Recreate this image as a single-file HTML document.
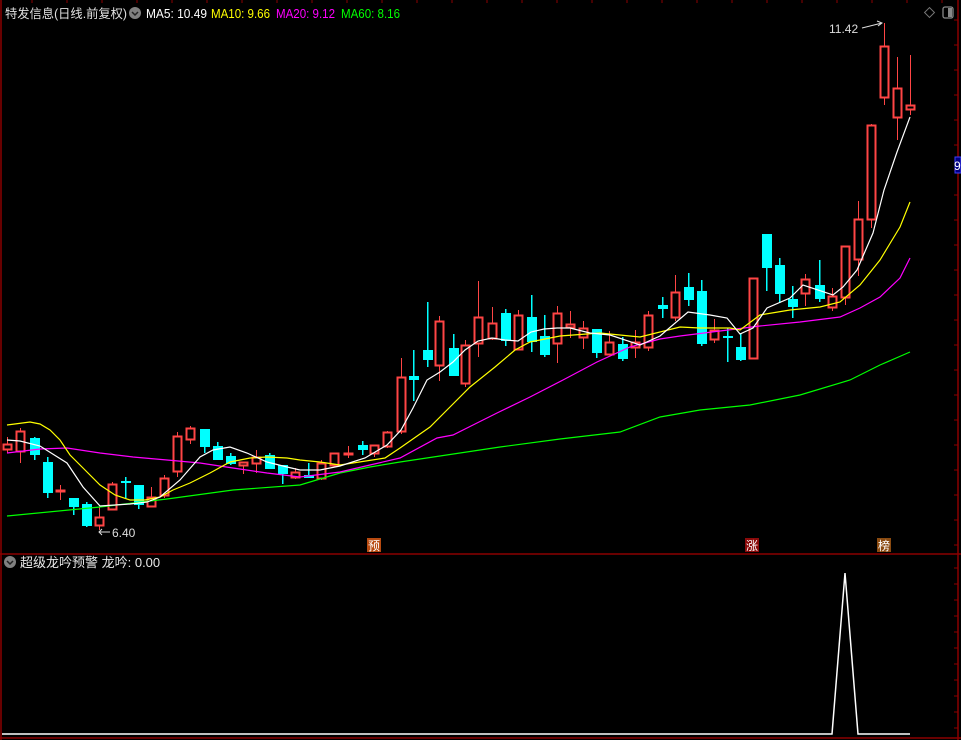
<!DOCTYPE html>
<html><head><meta charset="utf-8"><style>
html,body{margin:0;padding:0;background:#000;width:961px;height:740px;overflow:hidden}
svg{display:block}
text{font-family:"Liberation Sans","Noto Sans CJK SC",sans-serif}
</style></head><body>
<svg id="s" width="961" height="740" xmlns="http://www.w3.org/2000/svg">
<rect width="961" height="740" fill="#000"/>
<g stroke="#8b0000" stroke-width="1.5" fill="none">
<line x1="1" y1="0" x2="1" y2="740"/>
<line x1="958" y1="0" x2="958" y2="740"/>
<line x1="0" y1="554" x2="961" y2="554"/>
<line x1="0" y1="738" x2="961" y2="738"/>
</g>
<g id="ticks" stroke="#8b0000" stroke-width="1"></g>
<rect x="955" y="157" width="6" height="16" fill="#000080" stroke="#4040ff"/>
<text x="954" y="170" font-size="12" fill="#fff">9</text>
<!-- header -->
<text x="5" y="18" font-size="12.5" fill="#e0e0e0" textLength="122" lengthAdjust="spacingAndGlyphs">特发信息(日线.前复权)</text>
<circle cx="135" cy="13" r="6" fill="#808080"/>
<path d="M132 12 L135 15 L138 12" stroke="#222" stroke-width="1.5" fill="none"/>
<text x="146" y="18" font-size="12.5" fill="#fff" textLength="61" lengthAdjust="spacingAndGlyphs">MA5: 10.49</text>
<text x="211" y="18" font-size="12.5" fill="#ffff00" textLength="59" lengthAdjust="spacingAndGlyphs">MA10: 9.66</text>
<text x="276" y="18" font-size="12.5" fill="#ff00ff" textLength="59" lengthAdjust="spacingAndGlyphs">MA20: 9.12</text>
<text x="341" y="18" font-size="12.5" fill="#00ff00" textLength="59" lengthAdjust="spacingAndGlyphs">MA60: 8.16</text>
<rect x="926" y="9" width="7" height="7" transform="rotate(45 929.5 12.5)" fill="none" stroke="#777"/>
<rect x="943" y="7" width="10" height="11" rx="2" fill="none" stroke="#888" stroke-width="1.3"/>
<rect x="948" y="8" width="4" height="9" fill="#888"/>
<text x="829" y="33" font-size="12" fill="#ddd">11.42</text>
<path d="M862 28 L882 23 M877 21 L882 23 L878 26" stroke="#ddd" fill="none"/>
<text x="112" y="537" font-size="12" fill="#ddd">6.40</text>
<path d="M110 532 L99 532 M102 529 L99 532 L102 535" stroke="#ddd" fill="none"/>
<g id="c" shape-rendering="crispEdges"></g>
<g fill="none" stroke-width="1.2">
<polyline stroke="#00ff00" points="7,516 100,507 167,499 233,490 300,485 340,473 370,467 400,462 440,456 500,447 560,439 620,432 660,417 700,410 750,405 800,395 850,380 880,365 910,352"/>
<polyline stroke="#ff00ff" points="7,453 40,449 67,448 100,453 133,457 167,460 200,463 233,468 267,473 300,477 340,472 370,465 400,458 437,438 453,435 473,425 497,413 530,397 563,380 597,362 630,347 660,339 680,336 720,331 760,326 800,322 840,317 860,308 880,297 900,278 910,258"/>
<polyline stroke="#ffff00" points="7,425 30,422 40,424 50,430 60,440 70,455 85,470 100,485 115,495 130,500 145,500 160,497 173,490 190,483 210,473 230,462 250,458 267,457 287,458 300,460 320,462 340,465 385,458 400,448 430,427 450,407 470,387 495,367 515,350 530,342 560,336 600,333 640,337 680,327 700,328 730,328 740,330 760,315 790,310 820,307 840,302 860,285 880,260 900,227 910,202"/>
<polyline stroke="#ffffff" points="7,440 20,441 40,446 67,463 83,487 100,506 130,504 147,502 160,497 180,480 200,457 213,450 230,447 247,453 267,462 287,467 300,470 320,470 340,466 365,458 387,445 401,430 413,408 427,380 440,372 453,362 465,350 478,341 492,338 505,340 518,341 531,332 544,329 557,328 570,328 590,333 610,335 640,345 660,336 688,312 710,315 727,318 740,334 753,328 767,308 790,298 803,285 833,295 843,287 857,270 873,233 884,190 897,152 910,117"/>
</g>
<!-- markers -->
<rect x="367" y="538" width="14" height="14" fill="#b84a10"/>
<text x="368" y="550" font-size="12" fill="#fff">预</text>
<rect x="745" y="538" width="14" height="14" fill="#8a0a0a"/>
<text x="746" y="550" font-size="12" fill="#fff">涨</text>
<rect x="877" y="538" width="14" height="14" fill="#8a4a10"/>
<text x="878" y="550" font-size="12" fill="#fff">榜</text>
<!-- lower panel -->
<circle cx="10" cy="562" r="6" fill="#808080"/>
<path d="M7 561 L10 564 L13 561" stroke="#222" stroke-width="1.5" fill="none"/>
<text x="20" y="567" font-size="13" fill="#e8e8e8">超级龙吟预警 龙吟: 0.00</text>
<polyline points="2,734 832,734 845,573 858,734 910,734" fill="none" stroke="#fff" stroke-width="1.5"/>
</svg>
<script>
var d=[
[7,444,449,437,453,'r'],[20,431,451,428,463,'r'],[34,438,455,437,460,'c'],[47,462,493,457,498,'c'],[60,490,491,485,500,'r'],
[73,498,507,498,515,'c'],[86,504,526,502,527,'c'],[99,517,525,507,530,'r'],[112,484,509,482,510,'r'],[125,481,483,477,499,'c'],
[138,485,505,485,509,'c'],[151,497,506,487,507,'r'],[164,478,495,475,498,'r'],[177,436,471,432,477,'r'],[190,428,439,426,444,'r'],
[204,429,447,429,453,'c'],[217,446,460,442,460,'c'],[230,456,464,453,465,'c'],[243,462,465,462,474,'r'],[256,457,463,450,473,'r'],
[269,455,469,453,469,'c'],[282,465,474,465,484,'c'],[295,472,477,468,479,'r'],[308,475,478,463,478,'c'],[321,463,478,460,480,'r'],
[334,453,465,453,465,'r'],[348,453,454,446,458,'r'],[362,445,450,441,455,'c'],[374,445,453,445,457,'r'],[387,432,446,431,448,'r'],
[401,377,431,358,434,'r'],[413,376,380,350,401,'c'],[427,350,360,302,367,'c'],[439,321,365,316,381,'r'],[453,348,376,334,376,'c'],
[465,345,383,340,387,'r'],[478,317,343,281,357,'r'],[492,323,338,307,340,'r'],[505,313,341,309,346,'c'],[518,315,349,310,349,'r'],
[531,317,342,295,352,'c'],[544,336,355,315,357,'c'],[557,313,343,306,363,'r'],[570,324,327,311,338,'r'],[583,328,337,321,349,'r'],
[596,329,353,329,358,'c'],[609,342,354,331,354,'r'],[622,344,359,337,361,'c'],[635,342,347,330,358,'r'],[648,315,347,311,351,'r'],
[662,305,309,297,318,'c'],[675,292,317,275,321,'r'],[688,287,300,273,306,'c'],[701,291,344,280,346,'c'],[714,330,339,319,343,'r'],
[727,336,338,328,362,'c'],[740,347,360,333,361,'c'],[753,278,358,278,358,'r'],[766,234,268,234,291,'c'],[779,265,294,258,303,'c'],
[792,299,307,286,318,'c'],[805,279,293,274,306,'r'],[819,285,299,260,302,'c'],[832,296,307,288,311,'r'],[845,246,297,246,305,'r'],
[858,219,259,201,276,'r'],[871,125,219,124,228,'r'],[884,46,97,23,105,'r'],[897,88,117,57,140,'r'],[910,105,109,55,115,'r']];
var h='';
d.forEach(function(a){var x=a[0],t=a[1],b=a[2],hi=a[3],lo=a[4];
var col=a[5]=='r'?'#ff4545':'#00ffff';
if(a[5]=='r'){
h+='<rect x="'+x+'" y="'+hi+'" width="1" height="'+(t-hi)+'" fill="'+col+'"/>';
h+='<rect x="'+x+'" y="'+b+'" width="1" height="'+(lo-b)+'" fill="'+col+'"/>';
h+='<rect x="'+(x-3.5)+'" y="'+(t+.5)+'" width="8" height="'+Math.max(b-t,1)+'" fill="none" stroke="'+col+'" stroke-width="1.6"/>';}
else{
h+='<rect x="'+x+'" y="'+hi+'" width="1.5" height="'+(lo-hi)+'" fill="'+col+'"/>';
h+='<rect x="'+(x-4)+'" y="'+t+'" width="10" height="'+Math.max(b-t,2)+'" fill="'+col+'"/>';}
});
document.getElementById('c').innerHTML=h;
var k='';
for(var y=20;y<550;y+=25)k+='<line x1="954" y1="'+y+'" x2="958" y2="'+y+'"/>';
for(var y=568;y<738;y+=16)k+='<line x1="954" y1="'+y+'" x2="958" y2="'+y+'"/>';
for(var x=32;x<958;x+=35)k+='<line x1="'+x+'" y1="0" x2="'+x+'" y2="3"/>';
document.getElementById('ticks').innerHTML=k;
</script>
</body></html>
